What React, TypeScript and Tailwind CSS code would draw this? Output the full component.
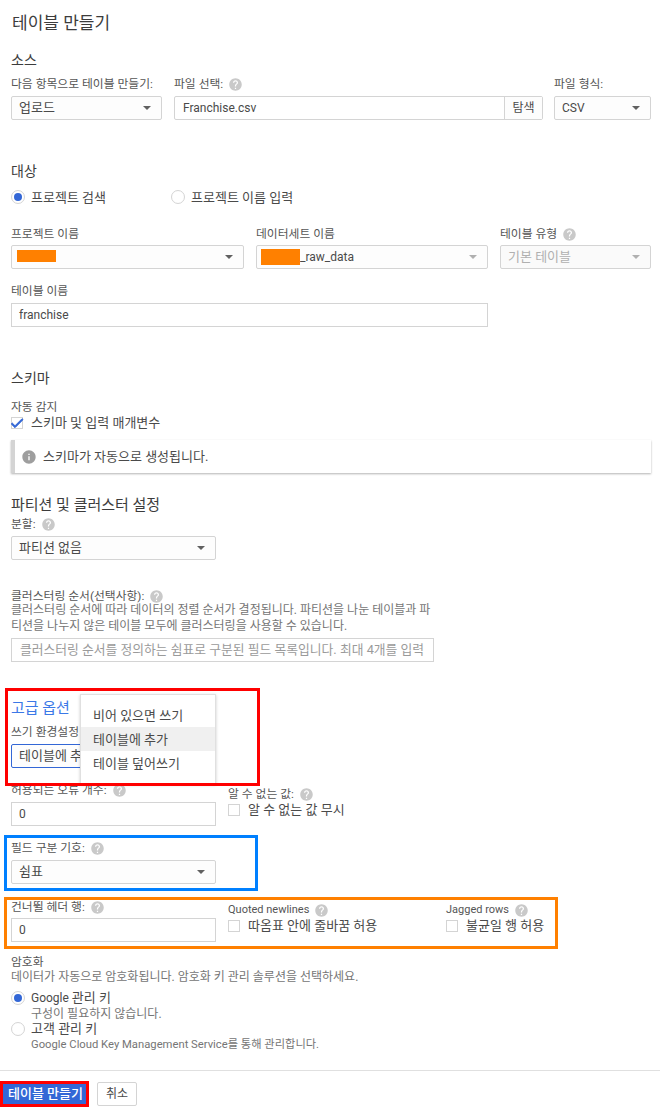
import React from 'react'

const help = "M12 2C6.48 2 2 6.48 2 12s4.48 10 10 10 10-4.48 10-10S17.52 2 12 2zm1 17h-2v-2h2v2zm2.07-7.75l-.9.92C13.45 12.9 13 13.5 13 15h-2v-.5c0-1.1.45-2.1 1.17-2.83l1.24-1.26c.37-.36.59-.86.59-1.41 0-1.1-.9-2-2-2s-2 .9-2 2H8c0-2.21 1.79-4 4-4s4 1.79 4 4c0 .88-.36 1.68-.93 2.25z"
const info = "M12 2C6.48 2 2 6.48 2 12s4.48 10 10 10 10-4.48 10-10S17.52 2 12 2zm1 15h-2v-6h2v6zm0-8h-2V7h2v2z"

const Help = () => (
    <svg viewBox="0 0 24 24" className="w-[15px] h-[15px] ml-[5px] shrink-0 fill-[#c9c9c9]">
        <path d={help} />
    </svg>
)

const Label = ({ text, hint, className = '' }: { text: string, hint?: boolean, className?: string }) => (
    <div className={`flex items-center h-4 text-[11.8px] leading-4 text-[#555555] whitespace-nowrap ${className}`}>
        {text}
        {hint && <Help />}
    </div>
)

const Heading = ({ text, className = '' }: { text: string, className?: string }) => (
    <div className={`h-5 text-[15px] leading-5 text-[#3c3c3c] ${className}`}>{text}</div>
)

type selectType = {
    children: React.ReactNode,
    disabled?: boolean,
    faint?: boolean,
    className?: string,
}

const Select = ({ children, disabled, faint, className = '' }: selectType) => (
    <div className={`flex items-center justify-between h-6 mt-1 pl-[7px] pr-[10px] border border-[#d4d4d4] rounded-[2px] text-[13px] ${disabled ? 'bg-[#fafafa] text-[#b0b0b0]' : 'bg-[#fdfdfd] text-[#4a4a4a]'} ${className}`}>
        <div className="flex items-center whitespace-nowrap">{children}</div>
        <svg viewBox="0 0 8 4" className={`w-2 h-1 ${disabled || faint ? 'fill-[#b0b0b0]' : 'fill-[#616161]'}`}>
            <path d="M0 0h8L4 4z" />
        </svg>
    </div>
)

const Input = ({ value, className = '' }: { value: string, className?: string }) => (
    <div className={`flex items-center h-6 mt-1 px-[7px] border border-[#d4d4d4] bg-white text-xs text-[#4a4a4a] ${className}`}>{value}</div>
)

const Radio = ({ on }: { on?: boolean }) => (
    <span className="flex items-center justify-center w-[14px] h-[14px] rounded-full border border-[#d4d4d4] bg-white shrink-0">
        {on && <span className="w-2 h-2 rounded-full bg-[#3367d6]" />}
    </span>
)

const Check = ({ on }: { on?: boolean }) => (
    <span className="relative block w-3 h-3 border border-[#d4d4d4] bg-white shrink-0">
        {on && (
            <svg viewBox="0 0 24 24" className="absolute -left-[3px] -top-[3px] w-4 h-4 fill-[#3367d6]">
                <path d="M9 16.17L4.83 12l-1.42 1.41L9 19 21 7l-1.41-1.41z" stroke="#3367d6" strokeWidth="1.5" />
            </svg>
        )}
    </span>
)

const CheckRow = ({ text, on }: { text: string, on?: boolean }) => (
    <div className="flex items-center h-4 text-[13px] text-[#4a4a4a] whitespace-nowrap">
        <Check on={on} />
        <span className="ml-2">{text}</span>
    </div>
)

const Menu = ({ text, active }: { text: string, active?: boolean }) => (
    <div className={`flex items-center h-6 pl-3 pt-px ${active ? 'bg-[#f0f0f0]' : ''}`}>{text}</div>
)

export default function App() {
    return (
        <div
            className="relative w-[660px] h-[1114px] overflow-hidden bg-white pl-[11px] pr-[9px]"
            style={{ fontFamily: 'Roboto, "Noto Sans CJK KR", sans-serif' }}
        >
            <h1 className="pt-[11px] pl-px h-[35px] text-[17px] leading-6 font-normal text-[#3c3c3c]">테이블 만들기</h1>

            <div className="h-5 mt-[15px] text-sm leading-5 text-[#3c3c3c]">소스</div>
            <div className="flex mt-[6px]">
                <div className="w-[151px] mr-3">
                    <Label text="다음 항목으로 테이블 만들기:" />
                    <Select>업로드</Select>
                </div>
                <div className="w-[369px] mr-[11px]">
                    <Label text="파일 선택:" hint />
                    <div className="flex h-6 mt-1 border border-[#d4d4d4] rounded-[2px] text-xs text-[#4a4a4a]">
                        <div className="flex items-center flex-1 px-2">Franchise.csv</div>
                        <div className="flex items-center justify-center w-[38px] border-l border-[#d4d4d4] bg-[#fdfdfd]">탐색</div>
                    </div>
                </div>
                <div className="w-[97px]">
                    <Label text="파일 형식:" />
                    <Select className="!text-xs">CSV</Select>
                </div>
            </div>

            <div className="h-5 mt-[41px] text-sm leading-5 text-[#3c3c3c]">대상</div>
            <div className="flex items-center h-5 mt-[6px] text-[13px] text-[#4a4a4a]">
                <div className="flex items-center w-[160px]">
                    <Radio on />
                    <span className="ml-[6px] pt-px">프로젝트 검색</span>
                </div>
                <div className="flex items-center">
                    <Radio />
                    <span className="ml-[6px] pt-px">프로젝트 이름 입력</span>
                </div>
            </div>

            <div className="flex mt-[18px]">
                <div className="w-[233px] mr-3">
                    <Label text="프로젝트 이름" className="mt-px -mb-px" />
                    <Select className="!pl-[5px]"><span className="block w-[39px] h-3 -mt-[3px] bg-[#ff8000]" /></Select>
                </div>
                <div className="w-[232px] mr-3">
                    <Label text="데이터세트 이름" className="mt-px -mb-px" />
                    <Select faint className="!pl-1 !text-xs">
                        <span className="block w-[39px] h-4 bg-[#ff8000]" />
                        <span>_raw_data</span>
                    </Select>
                </div>
                <div className="w-[151px]">
                    <Label text="테이블 유형" hint className="mt-px -mb-px" />
                    <Select disabled>기본 테이블</Select>
                </div>
            </div>

            <Label text="테이블 이름" className="mt-[14px]" />
            <Input value="franchise" className="w-[477px]" />

            <Heading text="스키마" className="mt-[41px] !text-sm" />
            <Label text="자동 감지" className="mt-[11px]" />
            <CheckRow text="스키마 및 입력 매개변수" on />
            <div className="flex items-center w-[640px] h-[33px] mt-[9px] pl-[6px] border-l-4 border-[#d4d4d4] bg-white shadow-[0_1px_2px_rgba(0,0,0,0.3)] text-[13px] text-[#4a4a4a]">
                <svg viewBox="0 0 24 24" className="w-4 h-4 mr-[6px] fill-[#9e9e9e]">
                    <path d={info} />
                </svg>
                스키마가 자동으로 생성됩니다.
            </div>

            <Heading text="파티션 및 클러스터 설정" className="mt-[22px]" />
            <Label text="분할:" hint className="mt-px" />
            <Select className="w-[205px]">파티션 없음</Select>

            <Label text="클러스터링 순서(선택사항):" hint className="mt-[30px] !h-3" />
            <p className="text-xs leading-4 text-[#757575] whitespace-nowrap">
                클러스터링 순서에 따라 데이터의 정렬 순서가 결정됩니다. 파티션을 나눈 테이블과 파<br />
                티션을 나누지 않은 테이블 모두에 클러스터링을 사용할 수 있습니다.
            </p>
            <div className="flex items-center w-[423px] h-6 mt-1 pl-2 border border-[#d4d4d4] text-[12.8px] text-[#9a9a9a] whitespace-nowrap">
                클러스터링 순서를 정의하는 쉼표로 구분된 필드 목록입니다. 최대 4개를 입력
            </div>

            <Heading text="고급 옵션" className="mt-[36px] !text-[#3b78e7]" />
            <Label text="쓰기 환경설정" className="mt-[6px]" />
            <Select className="w-[205px] !border-[#3367d6]">테이블에 추가</Select>

            <div className="flex mt-[14px]">
                <div className="w-[205px] mr-3">
                    <Label text="허용되는 오류 개수:" hint />
                    <Input value="0" />
                </div>
                <div className="pt-[4px]">
                    <Label text="알 수 없는 값:" hint />
                    <CheckRow text="알 수 없는 값 무시" />
                </div>
            </div>

            <Label text="필드 구분 기호:" hint className="mt-[14px]" />
            <Select className="w-[205px]">쉼표</Select>

            <div className="flex mt-[14px]">
                <div className="w-[205px] mr-3">
                    <Label text="건너뛸 헤더 행:" hint className="mt-px -mb-px" />
                    <Input value="0" />
                </div>
                <div className="w-[218px] pt-[4px]">
                    <Label text="Quoted newlines" hint className="!text-[11px]" />
                    <CheckRow text="따옴표 안에 줄바꿈 허용" />
                </div>
                <div className="pt-[4px]">
                    <Label text="Jagged rows" hint className="!text-[11px]" />
                    <CheckRow text="불균일 행 허용" />
                </div>
            </div>

            <Label text="암호화" className="mt-3 !h-[15px]" />
            <p className="text-xs leading-4 text-[#757575]">데이터가 자동으로 암호화됩니다. 암호화 키 관리 솔루션을 선택하세요.</p>
            <div className="flex items-center h-4 mt-[5px] text-xs text-[#4a4a4a]">
                <Radio on />
                <span className="ml-[6px]">Google <span className="text-[13px]">관리 키</span></span>
            </div>
            <p className="h-[15px] pl-5 text-xs leading-4 text-[#757575]">구성이 필요하지 않습니다.</p>
            <div className="flex items-center h-4 text-[13px] text-[#4a4a4a]">
                <Radio />
                <span className="ml-[6px]">고객 관리 키</span>
            </div>
            <p className="pl-5 text-[11.25px] leading-4 text-[#757575]">Google Cloud Key Management Service를 통해 관리합니다.</p>

            <div className="-ml-[11px] -mr-[9px] h-px mt-[17px] bg-[#e0e0e0]" />
            <div className="flex -ml-[8px] mt-[11px]">
                <button className="w-[85px] h-6 rounded-[2px] bg-[#3367d6] text-[13px] font-medium text-white">테이블 만들기</button>
                <button className="w-10 h-6 ml-[9px] border border-[#d4d4d4] rounded-[2px] bg-white text-xs text-[#4a4a4a]">취소</button>
            </div>

            {/* dropdown menu */}
            <div className="absolute left-[80px] top-[694px] w-[136px] h-[90px] pt-2 bg-white border border-[#e0e0e0] shadow-[0_1px_3px_rgba(0,0,0,0.2)] text-[13px] text-[#4a4a4a]">
                <Menu text="비어 있으면 쓰기" />
                <Menu text="테이블에 추가" active />
                <Menu text="테이블 덮어쓰기" />
            </div>

            {/* annotation boxes */}
            <div className="absolute left-[5px] top-[688px] w-[255px] h-[98px] border-[3px] border-[#ff0000]" />
            <div className="absolute left-[4px] top-[835px] w-[254px] h-[56px] border-[3px] border-[#0080ff]" />
            <div className="absolute left-[4px] top-[897px] w-[554px] h-[52px] border-[3px] border-[#ff8000]" />
            <div className="absolute left-0 top-[1081px] w-[89px] h-[26px] border-[3px] border-[#ff0000]" />
        </div>
    )
}
